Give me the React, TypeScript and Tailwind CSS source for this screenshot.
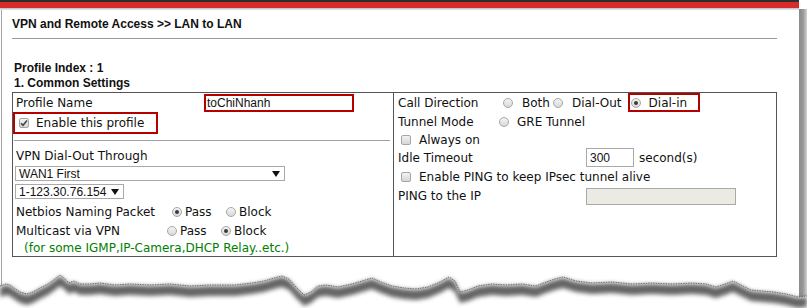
import * as React from "react";

const arial = "font-['Liberation_Sans',Arial,sans-serif]";
const verdana = "font-['DejaVu_Sans',Verdana,sans-serif]";

// jagged paper edge at the bottom of the screenshot
const tear: [number, number][] = [
  [0, 286], [6, 284], [10, 285], [14, 288], [20, 292], [27, 294], [33, 292], [40, 288],
  [48, 284], [55, 279], [60, 275], [64, 278], [69, 283], [74, 281], [80, 284], [90, 284],
  [100, 283], [115, 285], [130, 284], [150, 285], [170, 284], [190, 286], [210, 285],
  [235, 285], [252, 283], [264, 281], [274, 278], [282, 276], [289, 279], [296, 287],
  [304, 295], [311, 292], [318, 286], [326, 285], [338, 287], [352, 284], [362, 281],
  [372, 278], [381, 282], [392, 286], [404, 288], [416, 289], [428, 287], [440, 282],
  [449, 277], [455, 281], [460, 292], [468, 290], [478, 286], [492, 284], [506, 285],
  [522, 284], [536, 286], [546, 282], [555, 279], [563, 277], [576, 281], [592, 283],
  [612, 282], [632, 284], [652, 283], [672, 284], [692, 283], [706, 284], [716, 287],
  [725, 284], [733, 281], [741, 285], [751, 290], [762, 291], [774, 292], [786, 294],
  [798, 297], [807, 296],
];

function Radio({ checked }: { checked?: boolean }) {
  return (
    <span className="flex w-[10px] h-[10px] shrink-0 items-center justify-center rounded-full border border-[#a6a6a6] bg-linear-to-b from-[#f4f4f4] to-[#d9d9d9]">
      {checked && <span className="w-[4px] h-[4px] rounded-full bg-[#3a3a3a]" />}
    </span>
  );
}

function Check({ checked }: { checked?: boolean }) {
  return (
    <span className="flex w-[10px] h-[10px] shrink-0 items-center justify-center rounded-[2px] border border-[#a6a6a6] bg-linear-to-b from-[#f2f2f2] to-[#d6d6d6]">
      {checked && (
        <svg width="8" height="8" viewBox="0 0 8 8">
          <path d="M1 4.2 L3 6.2 L7 1.5" fill="none" stroke="#444" strokeWidth="1.6" />
        </svg>
      )}
    </span>
  );
}

function Select({ value, width }: { value: string; width: string }) {
  return (
    <div className={`${width} h-[15px] ml-[2px] flex items-center justify-between border border-[#a9a9a9] bg-white pl-[3px] pr-[4px] ${arial} text-[12px] text-[#111]`}>
      <span>{value}</span>
      <svg width="8" height="6" viewBox="0 0 8 6">
        <path d="M0 0 L8 0 L4 6 Z" fill="#111" />
      </svg>
    </div>
  );
}

export default function App() {
  const line = tear.map(([x, y]) => `${x},${y}`).join(" ");
  const fill = line + " 807,308 0,308";
  const shadow =
    tear.map(([x, y]) => `${x},${y + 1}`).join(" ") +
    " " +
    [...tear].reverse().map(([x, y]) => `${x},${y + 11}`).join(" ");

  return (
    <div className="relative w-[807px] h-[308px] overflow-hidden bg-white flex">
      <div className="w-[799px] flex flex-col">
        <div className="h-[2px] bg-[#2e2e2e]" />
        <div className="h-[6px] bg-[#d82b2b]" />
        <div className="h-[2px] bg-linear-to-b from-[#bcbcbc] to-[#ececec]" />
        <div className="flex-1 ml-[1px] border-l border-[#a3a3a3] text-[#111]">
          <div className={`mt-[7px] ml-[10px] w-[765px] pb-[7px] border-b border-[#9a9a9a] ${arial} font-bold text-[12px] leading-[14px]`}>
            VPN and Remote Access &gt;&gt; LAN to LAN
          </div>

          <div className={`mt-[22px] ml-[12px] ${arial} font-bold text-[12px] leading-[15px]`}>
            <div>Profile Index : 1</div>
            <div>1. Common Settings</div>
          </div>

          <div className={`mt-[1px] ml-[10px] w-[765px] h-[165px] border border-[#555] grid grid-cols-[381px_1fr] ${verdana} text-[12px] leading-[14px]`}>
            {/* left cell */}
            <div className="border-r border-[#555] flex flex-col">
              <div className="h-[19px] flex items-center pl-[3px]">
                <span className="w-[188px]">Profile Name</span>
                <div className={`w-[150px] h-[18px] border-2 border-[#b50000] pl-[1px] flex items-center ${arial} text-[12px]`}>
                  toChiNhanh
                </div>
              </div>
              <div className="w-[145px] h-[22px] border-2 border-[#b50000] flex items-center">
                <span className="ml-[4px]"><Check checked /></span>
                <span className="ml-[7px]">Enable this profile</span>
              </div>
              <div className="mt-[6px] ml-[1px] w-[376px] h-px bg-[#a0a0a0]" />
              <div className="mt-[6px] h-[18px] flex items-center pl-[3px]">VPN Dial-Out Through</div>
              <div className="mt-[1px]">
                <Select value="WAN1 First" width="w-[270px]" />
              </div>
              <div className="mt-[3px]">
                <Select value="1-123.30.76.154" width="w-[109px]" />
              </div>
              <div className="mt-[4px] h-[18px] flex items-center pl-[3px]">
                <span className="w-[156px]">Netbios Naming Packet</span>
                <span className="w-[54px] flex items-center"><Radio checked /><span className="ml-[3px]">Pass</span></span>
                <span className="flex items-center"><Radio /><span className="ml-[3px]">Block</span></span>
              </div>
              <div className="mt-[1px] h-[18px] flex items-center pl-[3px]">
                <span className="w-[151px]">Multicast via VPN</span>
                <span className="w-[54px] flex items-center"><Radio /><span className="ml-[3px]">Pass</span></span>
                <span className="flex items-center"><Radio checked /><span className="ml-[3px]">Block</span></span>
              </div>
              <div className="h-[16px] flex items-center pl-[11px] text-[#008000]">
                (for some IGMP,IP-Camera,DHCP Relay..etc.)
              </div>
            </div>

            {/* right cell */}
            <div className="flex flex-col pl-[4px]">
              <div className="h-[19px] flex items-center">
                <span className="w-[105px]">Call Direction</span>
                <Radio />
                <span className="ml-[9px]">Both</span>
                <span className="ml-[3px]"><Radio /></span>
                <span className="ml-[9px]">Dial-Out</span>
                <span className="ml-[6px] w-[72px] h-[19px] border-2 border-[#b50000] flex items-center pl-[1px]">
                  <Radio checked />
                  <span className="ml-[8px]">Dial-in</span>
                </span>
              </div>
              <div className="h-[19px] flex items-center">
                <span className="w-[101px]">Tunnel Mode</span>
                <Radio />
                <span className="ml-[8px]">GRE Tunnel</span>
              </div>
              <div className="h-[17px] flex items-center">
                <span className="ml-[3px]"><Check /></span>
                <span className="ml-[8px]">Always on</span>
              </div>
              <div className="h-[19px] flex items-center">
                <span className="w-[188px]">Idle Timeout</span>
                <div className={`w-[48px] h-[19px] border border-[#a9a9a9] pl-[3px] flex items-center ${arial} text-[12px]`}>300</div>
                <span className="ml-[5px]">second(s)</span>
              </div>
              <div className="h-[20px] flex items-center">
                <span className="ml-[3px]"><Check /></span>
                <span className="ml-[8px]">Enable PING to keep IPsec tunnel alive</span>
              </div>
              <div className="h-[18px] flex items-center">
                <span className="w-[188px]">PING to the IP</span>
                <div className="w-[150px] h-[17px] border border-[#a9a9a9] bg-[#ebebe4]" />
              </div>
            </div>
          </div>
        </div>
      </div>
      <div className="w-[8px] flex flex-col">
        <div className="h-[9px] bg-white" />
        <div className="flex-1 bg-linear-to-r from-[#8a8a8a] via-[#979797] to-[#d2d2d2]" />
      </div>

      <svg className="absolute left-0 top-[262px]" width="807" height="46" viewBox="0 262 807 46">
        <defs>
          <filter id="blur" x="-5%" y="-50%" width="110%" height="200%">
            <feGaussianBlur stdDeviation="2.2" />
          </filter>
        </defs>
        <polygon points={fill} fill="#ffffff" />
        <polygon points={shadow} fill="#4a4a4a" opacity="0.85" filter="url(#blur)" />
        <polyline points={line} fill="none" stroke="#555" strokeWidth="0.8" strokeDasharray="1.5 1" />
      </svg>
    </div>
  );
}
